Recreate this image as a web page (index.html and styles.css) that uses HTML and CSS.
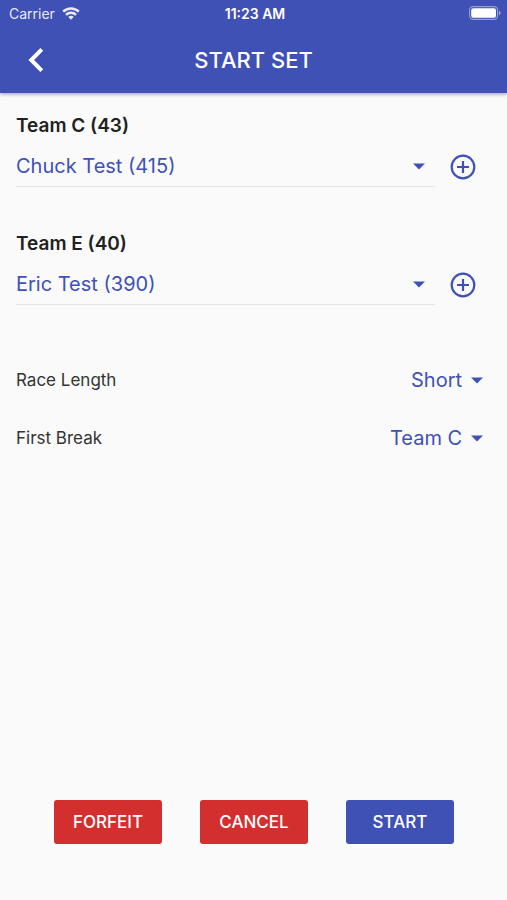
FILE: index.html
```html
<!DOCTYPE html>
<html lang="en">
<head>
<meta charset="utf-8">
<meta name="viewport" content="width=device-width, initial-scale=1">
<title>Start Set</title>
<link rel="stylesheet" href="styles.css">
</head>
<body>
<header class="app-bar">
  <div class="status">
    <div class="carrier">
      <span>Carrier</span>
      <svg width="18" height="13" viewBox="0 0 18 13" fill="none" stroke="currentColor" stroke-width="2.5" aria-hidden="true">
        <path d="M1.2 4.7a11 11 0 0 1 15.6 0M4 7.9a7 7 0 0 1 10 0"/>
        <path d="M9 12.8 6.3 10.1a3.8 3.8 0 0 1 5.4 0z" fill="currentColor" stroke="none"/>
      </svg>
    </div>
    <time class="clock">11:23 AM</time>
    <svg class="battery" width="32" height="14" viewBox="0 0 32 14" aria-hidden="true">
      <rect x=".6" y=".6" width="28" height="12.8" rx="3.6" fill="none" stroke="#fff" stroke-opacity=".45" stroke-width="1.1"/>
      <rect x="2.2" y="2.2" width="24.8" height="9.6" rx="2" fill="#fff"/>
      <path d="M30 4.8v4.4q1.6-.6 1.6-2.2T30 4.8z" fill="#fff" fill-opacity=".5"/>
    </svg>
  </div>
  <div class="toolbar">
    <button class="icon-button back" type="button" aria-label="Back">
      <svg width="18" height="26" viewBox="0 0 18 26" fill="none" stroke="currentColor" stroke-width="4" aria-hidden="true"><path d="M14.8 2.4 4.2 13l10.6 10.6"/></svg>
    </button>
    <h1>START SET</h1>
  </div>
</header>

<main class="form">
  <section class="team">
    <label for="player-c">Team C (43)</label>
    <div class="player">
      <div class="select underlined">
        <select id="player-c"><option>Chuck Test (415)</option></select>
        <svg class="caret" width="12" height="7" viewBox="0 0 12 7" fill="currentColor" aria-hidden="true"><path d="M0 .5h12l-6 6z"/></svg>
      </div>
      <button class="icon-button" type="button" aria-label="Add player to Team C">
        <svg width="26" height="26" viewBox="0 0 26 26" fill="none" stroke="currentColor" stroke-width="2.2" aria-hidden="true"><circle cx="13" cy="13" r="11.3"/><path d="M13 7v12M7 13h12"/></svg>
      </button>
    </div>
  </section>

  <section class="team">
    <label for="player-e">Team E (40)</label>
    <div class="player">
      <div class="select underlined">
        <select id="player-e"><option>Eric Test (390)</option></select>
        <svg class="caret" width="12" height="7" viewBox="0 0 12 7" fill="currentColor" aria-hidden="true"><path d="M0 .5h12l-6 6z"/></svg>
      </div>
      <button class="icon-button" type="button" aria-label="Add player to Team E">
        <svg width="26" height="26" viewBox="0 0 26 26" fill="none" stroke="currentColor" stroke-width="2.2" aria-hidden="true"><circle cx="13" cy="13" r="11.3"/><path d="M13 7v12M7 13h12"/></svg>
      </button>
    </div>
  </section>

  <div class="options">
    <div class="option">
      <label for="race-length">Race Length</label>
      <div class="select">
        <select id="race-length"><option>Short</option></select>
        <svg class="caret" width="12" height="7" viewBox="0 0 12 7" fill="currentColor" aria-hidden="true"><path d="M0 .5h12l-6 6z"/></svg>
      </div>
    </div>
    <div class="option">
      <label for="first-break">First Break</label>
      <div class="select">
        <select id="first-break"><option>Team C</option></select>
        <svg class="caret" width="12" height="7" viewBox="0 0 12 7" fill="currentColor" aria-hidden="true"><path d="M0 .5h12l-6 6z"/></svg>
      </div>
    </div>
  </div>
</main>

<footer class="actions">
  <button class="action danger" type="button">FORFEIT</button>
  <button class="action danger" type="button">CANCEL</button>
  <button class="action primary" type="button">START</button>
</footer>
</body>
</html>
```
FILE: styles.css
```css
:root {
  --indigo: #3f51b5;
  --red: #d32f2f;
}

* {
  box-sizing: border-box;
}

body {
  margin: 0;
  min-height: 100vh;
  display: flex;
  flex-direction: column;
  background: #fafafa;
  color: #212121;
  font-family: Inter, "Liberation Sans", sans-serif;
}

button,
select {
  margin: 0;
  padding: 0;
  border: 0;
  font: inherit;
  color: inherit;
  background: none;
  cursor: pointer;
}

svg {
  display: block;
}

.app-bar {
  background: var(--indigo);
  color: #fff;
  box-shadow: 0 1px 4px rgba(0, 0, 0, 0.4);
}

.status {
  display: grid;
  grid-template-columns: 1fr auto 1fr;
  align-items: center;
  height: 26px;
  padding: 0 6px 0 9px;
  font-size: 14px;
}

.carrier {
  display: flex;
  align-items: center;
  gap: 7px;
  color: #e8eaf6;
}

.clock {
  font-weight: 600;
}

.battery {
  justify-self: end;
}

.toolbar {
  display: grid;
  grid-template-columns: 40px 1fr 40px;
  align-items: center;
  height: 67px;
  padding: 0 16px;
}

.toolbar h1 {
  margin: 0;
  text-align: center;
  font-size: 22px;
  font-weight: 500;
}

.icon-button {
  display: grid;
  place-items: center;
  width: 40px;
  height: 40px;
}

.form {
  flex: 1;
  padding: 21px 24px 21px 16px;
}

.team {
  margin-bottom: 45px;
}

.team label {
  display: block;
  font-size: 19px;
  line-height: 24px;
  font-weight: 600;
}

.player {
  display: flex;
  align-items: center;
  gap: 8px;
  padding-top: 8px;
  color: var(--indigo);
}

.select {
  display: grid;
  align-items: center;
  color: var(--indigo);
  font-size: 20px;
}

.select select,
.caret {
  grid-area: 1 / 1;
}

.select select {
  appearance: none;
  height: 40px;
  padding-right: 20px;
  background: transparent;
}

.caret {
  justify-self: end;
  pointer-events: none;
}

.underlined {
  flex: 1;
  padding-right: 10px;
  border-bottom: 1px solid #e4e4e4;
}

.underlined select {
  width: 100%;
}

.options {
  margin-top: 46px;
}

.option {
  display: flex;
  align-items: center;
  justify-content: space-between;
  height: 58px;
}

.option label {
  font-size: 17px;
  color: #333;
}

.actions {
  display: grid;
  grid-template-columns: repeat(3, 1fr);
  gap: 38px;
  padding: 0 53px 56px 54px;
}

.action {
  height: 44px;
  border-radius: 3px;
  color: #fff;
  font-size: 17px;
  font-weight: 500;
}

.danger {
  background: var(--red);
}

.primary {
  background: var(--indigo);
}
```
